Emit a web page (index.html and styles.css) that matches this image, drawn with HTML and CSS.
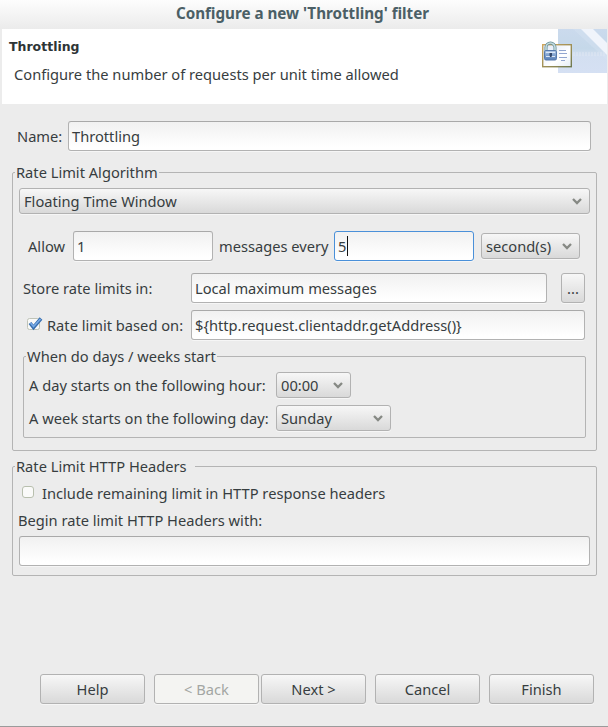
FILE: index.html
```html
<!DOCTYPE html>
<html lang="en">
<head>
<meta charset="utf-8">
<title>Configure a new 'Throttling' filter</title>
<link rel="stylesheet" href="styles.css">
</head>
<body>
<main class="dialog">
  <div class="titlebar">Configure a new 'Throttling' filter</div>
  <header class="banner">
    <div class="banner-text">
      <h1>Throttling</h1>
      <p>Configure the number of requests per unit time allowed</p>
    </div>
    <svg class="banner-art" width="77" height="46" viewBox="0 0 77 46">
      <defs>
        <linearGradient id="sky" x1="0" y1="0" x2="0" y2="1"><stop offset="0" stop-color="#cbdaed"/><stop offset=".45" stop-color="#c5d8e9"/><stop offset=".6" stop-color="#d3dff1"/><stop offset="1" stop-color="#d5e0f3"/></linearGradient>
        <linearGradient id="card" x1="0" y1="0" x2="1" y2="1"><stop offset="0" stop-color="#dfe8f7"/><stop offset=".6" stop-color="#fff"/><stop offset="1" stop-color="#e5edf7"/></linearGradient>
        <linearGradient id="rim" x1="0" y1="0" x2="1" y2="1"><stop offset="0" stop-color="#d0a75d"/><stop offset="1" stop-color="#6f7950"/></linearGradient>
        <linearGradient id="lock" x1="0" y1="0" x2="0" y2="1"><stop offset="0" stop-color="#b5cceb"/><stop offset=".4" stop-color="#88a8d2"/><stop offset="1" stop-color="#567db6"/></linearGradient>
      </defs>
      <path fill="url(#sky)" d="M28 0h49v44H28z"/>
      <path fill="#dbe5f3" d="M52 0 77 22v9L43 0z" opacity=".35"/>
      <path fill="#f0f4fb" d="M51 0h12l14 14v12z"/>
      <path stroke="#dfe7f3" stroke-dasharray="2 1" stroke-width="4" d="M43 25h33" opacity=".5"/>
      <rect x="12.700" y="15.700" width="28.600" height="22" fill="url(#card)" stroke="url(#rim)" stroke-width="1.400"/>
      <path stroke="#91a5cf" d="M29 21.500h7M29 24.500h8M29 28.500h8M31 31.500h4" fill="none"/>
      <path d="M16 22v-3.500a4.500 4.500 0 0 1 9 0V22" fill="none" stroke="#658d98" stroke-width="3"/>
      <path d="M16 22v-3.500a4.500 4.500 0 0 1 9 0V22" fill="none" stroke="#c5dcdd" stroke-width="1.600"/>
      <rect x="14.500" y="21.500" width="12" height="9.500" rx="1.500" fill="url(#lock)" stroke="#5679ac"/>
      <path d="M16 23.500h9M16 27.500h9" stroke="#dce7f7"/>
      <path d="M19.500 24h2.500v2l-.5 2h-1.500l-.5-2z" fill="#33476b"/>
    </svg>
  </header>

  <div class="form">
    <div class="row name-row"><label class="name-label">Name:</label><div class="field grow">Throttling</div></div>

    <fieldset class="group algorithm">
      <legend>Rate Limit Algorithm</legend>
      <div class="select wide"><span>Floating Time Window</span><svg width="10" height="7"><path d="m1 1 4 4 4-4"/></svg></div>
      <div class="row allow-row">
        <label class="allow-label">Allow</label><div class="field amount">1</div>
        <label class="every-label">messages every</label><div class="field amount focused">5<i class="caret"></i></div>
        <div class="select unit"><span>second(s)</span><svg width="10" height="7"><path d="m1 1 4 4 4-4"/></svg></div>
      </div>
      <div class="row store-row">
        <label class="lead">Store rate limits in:</label><div class="field grow">Local maximum messages</div><div class="button browse">...</div>
      </div>
      <div class="row based-row">
        <div class="lead check"><svg class="box" width="18" height="18" viewBox="0 0 18 18"><rect x="1.500" y="3.500" width="12" height="11" rx="2" fill="#f9f9f8" stroke="#bfc3b7"/><path d="m4 8 3.500 4.500L15 3.500" fill="none" stroke="#386fae" stroke-width="3.600"/><path d="m4.500 8 3 3.500L14.500 4" fill="none" stroke="#77aae6" stroke-width="1.600"/></svg><label>Rate limit based on:</label></div><div class="field grow">${http.request.clientaddr.getAddress()}</div>
      </div>
      <fieldset class="group starts">
        <legend>When do days / weeks start</legend>
        <div class="row"><label class="start-label">A day starts on the following hour:</label><div class="select hour"><span>00:00</span><svg width="10" height="7"><path d="m1 1 4 4 4-4"/></svg></div></div>
        <div class="row"><label class="start-label">A week starts on the following day:</label><div class="select day"><span>Sunday</span><svg width="10" height="7"><path d="m1 1 4 4 4-4"/></svg></div></div>
      </fieldset>
    </fieldset>

    <fieldset class="group headers">
      <legend>Rate Limit HTTP Headers</legend>
      <div class="include"><span class="empty-box"></span><label>Include remaining limit in HTTP response headers</label></div>
      <label class="begin">Begin rate limit HTTP Headers with:</label>
      <div class="field"></div>
    </fieldset>
  </div>

  <footer class="actions">
    <div class="button">Help</div>
    <div class="pair"><div class="button disabled">&lt; Back</div><div class="button">Next &gt;</div></div>
    <div class="button">Cancel</div>
    <div class="button">Finish</div>
  </footer>
</main>
</body>
</html>
```
FILE: styles.css
```css
* { box-sizing: border-box; }
body { margin: 0; background: #ececec; color: #373d40; font: 14.67px/20px "Noto Sans", "Open Sans", sans-serif; }
.dialog { width: 608px; height: 727px; display: flex; flex-direction: column; overflow: hidden; border-bottom: 1px solid #9b9b9b; white-space: nowrap; }
.titlebar { height: 29px; padding-right: 3px; text-align: center; font-size: 15.2px; font-weight: bold; line-height: 27px; color: #4b5f66; background: linear-gradient(#fdfdfd, #ebebeb); }
.banner { height: 75px; margin: 0 1px 0 2px; background: #fff; display: flex; justify-content: space-between; }
.banner-text { padding: 8px 0 0 7px; }
h1 { margin: 0; font: bold 12.5px/20px "DejaVu Sans", sans-serif; color: #2e3436; }
.banner p { margin: 7px 0 0 5px; }
.banner-art { display: block; }
.form { height: 546px; padding: 17px 11px 0 12px; }
.row { display: flex; align-items: center; }
.grow { flex: 1; }
.name-row { padding: 0 6px 0 5px; margin-bottom: 12px; }
.name-label { width: 51px; }
.field { height: 30px; padding: 0 3px; line-height: 28px; border: 1px solid #b2b2b2; border-top-color: #a9a9a9; border-radius: 3px; background: linear-gradient(#f1f1f1, #fff 90%); box-shadow: 0 1px #f6f6f6; }
.group { margin: 0; padding: 0 6px; border: 1px solid #b4b4b4; border-radius: 2px; min-width: 0; }
legend { height: 19px; line-height: 18px; padding: 0 1px; margin-left: -4px; }
.algorithm { height: 288px; padding-top: 6px; }
.select { height: 26px; display: flex; justify-content: space-between; align-items: center; padding: 0 7px 0 4px; line-height: 24px; border: 1px solid #b2b2b2; border-radius: 3px; background: linear-gradient(#f7f7f7, #d9d9d9); box-shadow: 0 1px #f6f6f6; }
.select svg { fill: none; stroke: #868984; stroke-width: 2.3; }
.allow-row { margin-top: 17px; }
.allow-label { width: 54px; padding-left: 9px; }
.amount { width: 140px; }
.every-label { width: 121px; padding-left: 6px; }
.focused { border-color: #4a90d9; display: flex; align-items: center; }
.caret { width: 1px; height: 20px; margin-left: 1px; background: #111; }
.unit { width: 99px; margin-left: 7px; }
.store-row { margin: 12px 5px 0 0; }
.lead { width: 172px; padding-left: 4px; }
.button { height: 30px; width: 105px; line-height: 28px; text-align: center; border: 1px solid #b2b2b2; border-radius: 3px; background: linear-gradient(#f7f7f7, #d9d9d9); box-shadow: 0 1px #f6f6f6; }
.browse { width: 24px; margin-left: 14px; }
.based-row { margin: 7px 5px 0 0; }
.check { display: flex; align-items: center; padding-left: 7px; }
.box { margin: -3px 3px 0 0; }
.starts { height: 91px; margin: 7px 4px 0 4px; padding: 6px 5px 0; }
.starts legend { margin-left: -3px; }
.starts .row + .row { margin-top: 7px; }
.start-label { width: 247px; }
.hour { width: 75px; }
.day { width: 115px; }
.headers { height: 119px; margin-top: 6px; padding-top: 7px; }
.headers legend { padding-right: 8px; }
.include { display: flex; align-items: center; padding-left: 3px; height: 20px; }
.empty-box { width: 12px; height: 12px; margin: -3px 8px 0 0; border: 1px solid #b8bfae; border-radius: 3px; background: #fafaf9; }
.begin { display: block; margin: 7px 0 6px -1px; }
.actions { display: flex; gap: 9px; margin: 24px 0 0 40px; }
.pair { display: flex; gap: 2px; }
.disabled { color: #a3a6a3; background: #f4f4f2; }
```
